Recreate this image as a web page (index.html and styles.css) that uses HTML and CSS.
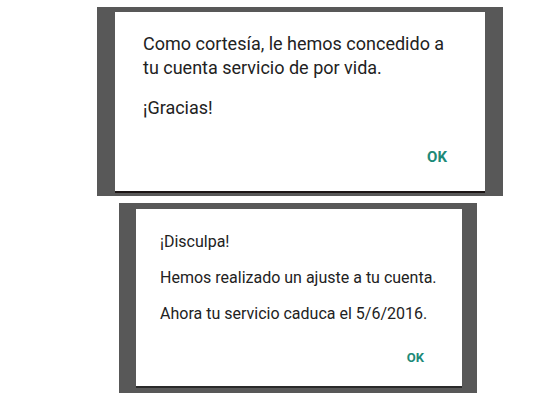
FILE: index.html
```html
<!DOCTYPE html>
<html lang="es">
<head>
<meta charset="utf-8">
<link rel="stylesheet" href="styles.css">
</head>
<body>
<div class="page">
  <div class="frame frame-top">
    <div class="dialog dialog-top">
      <p class="msg">Como cortesía, le hemos concedido a<br>tu cuenta servicio de por vida.</p>
      <p class="msg thanks">¡Gracias!</p>
      <div class="actions"><span class="ok ok-top">OK</span></div>
    </div>
  </div>
  <div class="frame frame-bottom">
    <div class="dialog dialog-bottom">
      <p class="msg2">¡Disculpa!</p>
      <p class="msg2">Hemos realizado un ajuste a tu cuenta.</p>
      <p class="msg2">Ahora tu servicio caduca el 5/6/2016.</p>
      <div class="actions"><span class="ok ok-bottom">OK</span></div>
    </div>
  </div>
</div>
</body>
</html>
```

FILE: styles.css
```css
html, body {
  margin: 0;
  padding: 0;
  background: #ffffff;
}
.page {
  width: 534px;
  height: 400px;
  display: flex;
  flex-direction: column;
  font-family: Roboto, "Noto Sans", sans-serif;
  color: #222222;
}
.frame {
  background: #585858;
  box-sizing: border-box;
  display: flex;
}
.frame-top {
  margin: 7px 0 0 97px;
  width: 406px;
  height: 189px;
  padding: 5px 18px 3px 18px;
}
.frame-bottom {
  margin: 7px 0 0 119px;
  width: 358px;
  height: 190px;
  padding: 6px 15px 5px 17px;
}
.dialog {
  background: #ffffff;
  flex: 1;
  display: flex;
  flex-direction: column;
  box-sizing: border-box;
}
.dialog-top {
  padding: 20px 28px 0 28px;
  border-bottom: 2px solid #1a1414;
}
.dialog-bottom {
  padding: 23px 24px 0 24px;
  border-bottom: 2px solid #2a2a2a;
}
.msg {
  margin: 0;
  font-size: 18px;
  line-height: 24px;
}
.thanks {
  margin-top: 16px;
}
.msg2 {
  margin: 0 0 16px 0;
  font-size: 16px;
  line-height: 20px;
}
.actions {
  display: flex;
  justify-content: flex-end;
}
.ok {
  color: #1d8a78;
  font-weight: bold;
}
.ok-top {
  font-size: 15px;
  margin-top: 28px;
  margin-right: 10px;
}
.ok-bottom {
  font-size: 13px;
  margin-top: 10px;
  margin-right: 14px;
}
```
